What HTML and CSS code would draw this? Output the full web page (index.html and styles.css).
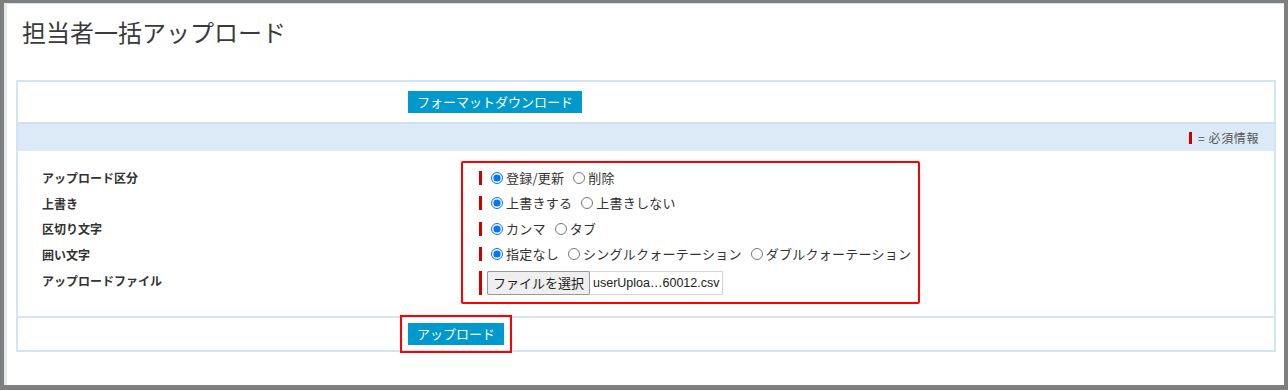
FILE: index.html
```html
<!DOCTYPE html>
<html lang="ja">
<head>
    <meta charset="UTF-8">
    <meta name="viewport" content="width=device-width, initial-scale=1.0">
    <title>担当者一括アップロード</title>
    <link rel="stylesheet" href="styles.css">
</head>
<body>

    <div class="screen">
        <h1 class="page-title">担当者一括アップロード</h1>

        <div class="panel">
            <div class="panel-row top-row">
                <button class="btn" id="format">フォーマットダウンロード</button>
            </div>
            <div class="panel-head"><span class="req-mark"></span>= 必須情報</div>

            <div class="panel-body">
                <div class="col labels">
                    <div class="row r1">アップロード区分</div>
                    <div class="row r2">上書き</div>
                    <div class="row r3">区切り文字</div>
                    <div class="row r4">囲い文字</div>
                    <div class="row r5">アップロードファイル</div>
                </div>
                <div class="col fields">
                    <div class="row r1">
                        <div class="value">
                            <label><input type="radio" name="kbn" checked>登録/更新</label>
                            <label><input type="radio" name="kbn">削除</label>
                        </div>
                    </div>
                    <div class="row r2">
                        <div class="value">
                            <label><input type="radio" name="overwrite" checked>上書きする</label>
                            <label><input type="radio" name="overwrite">上書きしない</label>
                        </div>
                    </div>
                    <div class="row r3">
                        <div class="value">
                            <label><input type="radio" name="delim" checked>カンマ</label>
                            <label><input type="radio" name="delim">タブ</label>
                        </div>
                    </div>
                    <div class="row r4">
                        <div class="value">
                            <label><input type="radio" name="quote" checked>指定なし</label>
                            <label><input type="radio" name="quote">シングルクォーテーション</label>
                            <label><input type="radio" name="quote">ダブルクォーテーション</label>
                        </div>
                    </div>
                    <div class="row r5">
                        <div class="value">
                            <div class="file">
                                <span class="file-btn">ファイルを選択</span>
                                <span class="file-name">userUploa…60012.csv</span>
                            </div>
                        </div>
                    </div>
                </div>
            </div>

            <div class="panel-row foot-row">
                <button class="btn btn-upload" id="upload">アップロード</button>
            </div>
        </div>
    </div>

</body>
</html>
```

FILE: styles.css
```css
html, body {
    margin: 0;
    padding: 0;
    background-color: #7f7f7f;
}
body {
    padding-top: 3px;
    font-family: "Noto Sans CJK JP", "Noto Sans", sans-serif;
    color: #333;
}
.screen {
    margin: 0 4px;
    height: 382px;
    box-sizing: border-box;
    background-color: #fff;
    border-left: 3px solid #e3eaf1;
    border-top: 1px solid #d2e4f4;
    overflow: hidden;
}
.page-title {
    margin: 10px 0 0 15px;
    font-size: 24px;
    line-height: 36px;
    font-weight: 400;
    color: #3a3a3a;
}
.panel {
    margin: 30px 8px 0 9px;
    border: 2px solid #d3e4f4;
}
.panel-row {
    display: flex;
    align-items: center;
    padding-left: 390px;
}
.top-row {
    height: 40px;
}
.foot-row {
    height: 32px;
    border-top: 2px solid #d3e4f4;
}
.panel-head {
    display: flex;
    align-items: center;
    justify-content: flex-end;
    height: 27px;
    padding-right: 15px;
    border-top: 2px solid #cfe1f3;
    background-color: #dceaf8;
    font-size: 12px;
    letter-spacing: 0.6px;
    color: #555;
}
.req-mark {
    width: 3px;
    height: 12px;
    margin-right: 6px;
    background-color: #cc0000;
}
.btn {
    height: 22px;
    padding: 0 9px;
    border: none;
    border-radius: 0;
    background-color: #0099cc;
    color: #fff;
    font-family: "Noto Sans CJK JP", sans-serif;
    font-size: 13px;
    line-height: 22px;
    cursor: pointer;
}
.btn-upload {
    outline: 2px solid #ff0000;
    outline-offset: 6px;
}
.panel-body {
    display: flex;
    padding: 10px 0 12px;
}
.col {
    border: 2px solid transparent;
    padding: 2px 0 4px;
}
.labels {
    width: 443px;
    box-sizing: border-box;
    padding-left: 24px;
    border-left: none;
    font-size: 12px;
    font-weight: bold;
    color: #333;
}
.labels .r5 {
    padding-bottom: 4px;
    box-sizing: border-box;
}
.fields {
    width: 459px;
    box-sizing: border-box;
    padding-left: 16px;
    border-color: #ff0000;
    border-radius: 2px;
    font-size: 13px;
    letter-spacing: 0.25px;
    white-space: nowrap;
}
.row {
    display: flex;
    align-items: center;
}
.r1 { height: 25px; }
.r2 { height: 26px; }
.r3 { height: 25px; }
.r4 { height: 26px; }
.r5 { height: 31px; }
.value {
    display: flex;
    align-items: center;
    min-height: 14px;
    padding-left: 4px;
    border-left: 3px solid #cc0000;
    line-height: 14px;
}
.value label {
    display: inline-flex;
    flex-shrink: 0;
    align-items: center;
    margin-right: 4px;
}
.value input[type="radio"] {
    width: 12px;
    height: 12px;
    margin: 0 3px 0 5px;
}
.file {
    display: flex;
    align-items: stretch;
    height: 24px;
    margin-left: 1px;
    border: 1px solid #d4d4d4;
    box-sizing: border-box;
    letter-spacing: 0;
}
.file-btn {
    display: flex;
    align-items: center;
    margin: -1px 0 -1px -1px;
    padding: 0 5px;
    border: 1px solid #999;
    border-radius: 2px;
    background-color: #efefef;
    font-size: 13px;
    color: #222;
}
.file-name {
    display: flex;
    align-items: center;
    padding: 0 3px;
    font-family: "Liberation Sans", Arial, sans-serif;
    font-size: 12.5px;
    color: #222;
}
```
